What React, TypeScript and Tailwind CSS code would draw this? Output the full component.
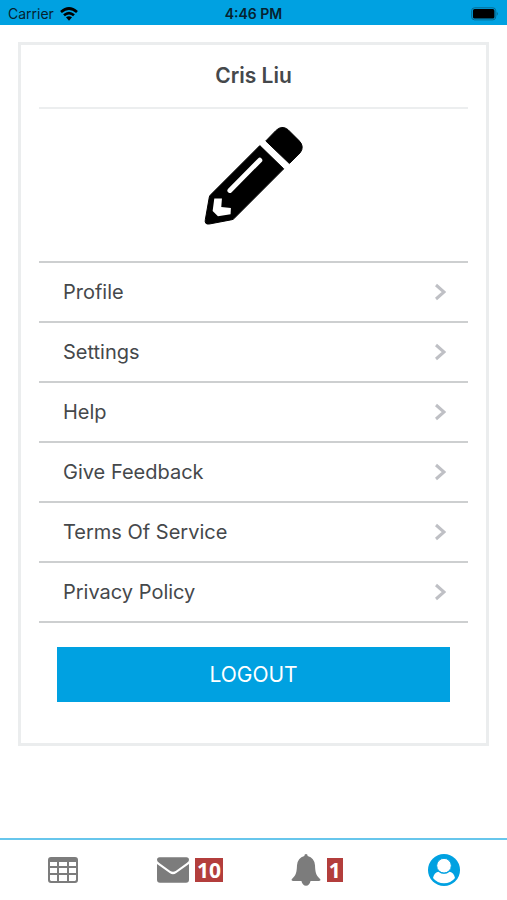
import type { ReactNode } from 'react';

const menuItems = ['Profile', 'Settings', 'Help', 'Give Feedback', 'Terms Of Service', 'Privacy Policy'];

const StatusBar = () => (
  <header className="grid h-[25px] grid-cols-3 items-center bg-[#00a1e1] px-2 pt-0.5 text-sm leading-none text-[#06222f]">
    <div className="flex items-center gap-1.5">
      <span>Carrier</span>
      <svg viewBox="0 0 54 42" className="h-3.5 w-[18px]" fill="none" stroke="#000" strokeWidth="8" aria-hidden="true">
        <path d="M3 15Q27-6 51 15" />
        <path d="M12 25Q27 12 42 25" />
        <path d="M18 31Q27 24 36 31L27 41Z" fill="#000" stroke="none" />
      </svg>
    </div>
    <span className="text-center font-semibold">4:46 PM</span>
    <svg viewBox="0 0 86 42" className="h-3.5 w-7 justify-self-end" aria-hidden="true">
      <rect x="2" y="2" width="74" height="37" rx="9" fill="none" stroke="#05698f" strokeWidth="3" />
      <rect x="6" y="6" width="66" height="29" rx="5" />
      <path d="M79 14Q86 20 79 27Z" fill="#05698f" />
    </svg>
  </header>
);

const PencilIcon = () => (
  <svg viewBox="40 30 304 304" className="size-[101px]" aria-hidden="true">
    <path d="M229 78L259 47Q277 29 296 44L329 77Q346 94 333 113L300 146Z" stroke="#000" strokeWidth="3" strokeLinejoin="round" />
    <path
      d="M211 92L283 162L134 311Q132 314 127 315L59 328Q44 330 47 315L59 247Q60 243 63 240Z"
      stroke="#000"
      strokeWidth="3"
      strokeLinejoin="round"
    />
    <path d="M121 227L211 136" stroke="#fff" strokeWidth="15" strokeLinecap="round" />
    <path d="M74 251H97L95 277L124 280L123 299L85 305L69 289Z" fill="#fff" />
  </svg>
);

const ChevronIcon = () => (
  <svg viewBox="0 0 12 18" className="h-[18px] w-3" fill="none" stroke="#bfc0c5" strokeWidth="3" aria-hidden="true">
    <path d="M2 2L10 9L2 16" />
  </svg>
);

const TableIcon = () => (
  <svg viewBox="0 0 30 26" className="h-[26px] w-[30px]" fill="#7c7c7c" aria-hidden="true">
    <path
      fillRule="evenodd"
      d="M3 0H27Q30 0 30 3V23Q30 26 27 26H3Q0 26 0 23V3Q0 0 3 0ZM2 5V9H9V5ZM11 5V9H19V5ZM21 5V9H28V5ZM2 11V16H9V11ZM11 11V16H19V11ZM21 11V16H28V11ZM2 18V23L3 24H9V18ZM11 18V24H19V18ZM21 18V24H27L28 23V18Z"
    />
  </svg>
);

const MailIcon = () => (
  <svg viewBox="0 0 96 76" className="h-[26px] w-8" fill="#7c7c7c" aria-hidden="true">
    <path d="M8 0H88Q96 0 96 8Q96 12 89 17L56 41Q48 46 40 41L7 17Q0 12 0 8Q0 0 8 0Z" />
    <path d="M0 20L38 47Q48 55 58 47L96 20V67Q96 76 87 76H9Q0 76 0 67Z" />
  </svg>
);

const BellIcon = () => (
  <svg viewBox="0 0 90 96" className="h-8 w-[30px]" fill="#7c7c7c" aria-hidden="true">
    <path d="M40 6Q40 0 45 0Q50 0 50 6Q70 11 72 34C73 57 75 64 87 75Q91 80 84 81H6Q-1 80 3 75C15 64 17 57 18 34Q20 11 40 6Z" />
    <path d="M31 80H59Q55 95 45 95Q35 95 31 80Z" />
  </svg>
);

const UserIcon = () => (
  <svg viewBox="0 0 96 96" className="size-8" aria-hidden="true">
    <circle cx="48" cy="48" r="48" fill="#00a1e1" />
    <path d="M15 72Q18 56 31 53Q48 66 65 53Q78 56 81 72Q68 88 48 88Q28 88 15 72Z" fill="#fff" />
    <circle cx="48" cy="35" r="22" fill="#fff" stroke="#00a1e1" strokeWidth="3" />
  </svg>
);

const Badge = ({ children }: { children: ReactNode }) => (
  <span className="bg-[#b33e3c] px-0.5 font-['Open_Sans',sans-serif] text-[21px] leading-6 font-bold text-white">
    {children}
  </span>
);

const TabBar = () => (
  <nav className="grid h-[62px] grid-cols-4 border-t-2 border-[#67c6ec] bg-white">
    <a href="#calendar" aria-label="Calendar" className="flex items-center justify-center">
      <TableIcon />
    </a>
    <a href="#messages" aria-label="Messages" className="flex items-center justify-center gap-1.5">
      <MailIcon />
      <Badge>10</Badge>
    </a>
    <a href="#notifications" aria-label="Notifications" className="flex items-center justify-center gap-1.5">
      <BellIcon />
      <Badge>1</Badge>
    </a>
    <a href="#account" aria-label="Account" aria-current="page" className="flex items-center justify-center">
      <UserIcon />
    </a>
  </nav>
);

export default function App() {
  return (
    <div className="flex min-h-screen flex-col bg-white font-[Inter,Roboto,sans-serif] text-[#45484b]">
      <StatusBar />
      <main className="flex-1 px-[18px] pt-[17px] pb-6">
        <section className="border-3 border-[#ebedee] px-[18px] pb-[41px]">
          <h1 className="border-b-2 border-[#eceeef] py-4 text-center text-[21px] leading-[30px] font-semibold">Cris Liu</h1>
          <div className="flex justify-center pt-4 pb-[35px]">
            <PencilIcon />
          </div>
          <ul className="border-t-2 border-[#cdcfd0]">
            {menuItems.map((item) => (
              <li key={item} className="border-b-2 border-[#cdcfd0]">
                <a href="#" className="flex h-[58px] items-center justify-between pr-[22px] pl-6 text-xl">
                  {item}
                  <ChevronIcon />
                </a>
              </li>
            ))}
          </ul>
          <div className="px-[18px] pt-6">
            <button type="button" className="h-[55px] w-full bg-[#00a1e1] text-[21px] text-white">
              LOGOUT
            </button>
          </div>
        </section>
      </main>
      <TabBar />
    </div>
  );
}
